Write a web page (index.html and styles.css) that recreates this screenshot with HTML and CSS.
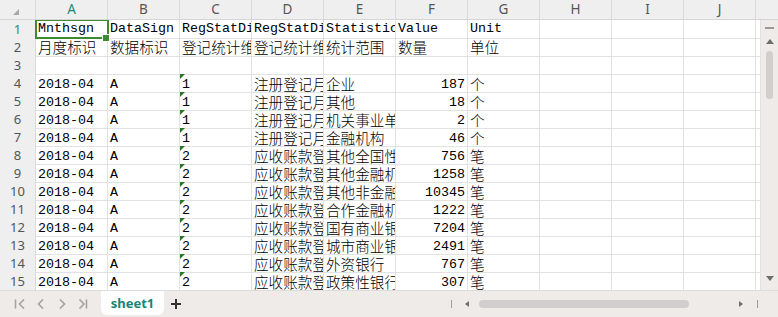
FILE: index.html
```html
<!DOCTYPE html>
<html lang="zh-CN">
<head>
    <meta charset="UTF-8">
    <title>sheet1</title>
    <link rel="stylesheet" href="styles.css">
</head>
<body>
    <div class="sheet">
        <div class="col-heads">
            <div class="corner"><span class="corner-mark"></span></div>
            <div class="col-head active">A</div>
            <div class="col-head">B</div>
            <div class="col-head">C</div>
            <div class="col-head">D</div>
            <div class="col-head">E</div>
            <div class="col-head">F</div>
            <div class="col-head">G</div>
            <div class="col-head">H</div>
            <div class="col-head">I</div>
            <div class="col-head">J</div>
            <div class="col-head filler"></div>
        </div>

        <div class="body">
            <div class="grid">
                <div class="row mid">
                    <div class="row-head active">1</div>
                    <div class="cell selected">Mnthsgn</div>
                    <div class="cell">DataSign</div>
                    <div class="cell">RegStatDimCode</div>
                    <div class="cell">RegStatDimName</div>
                    <div class="cell">StatisticalScope</div>
                    <div class="cell">Value</div>
                    <div class="cell">Unit</div>
                    <div class="cell"></div><div class="cell"></div><div class="cell"></div><div class="cell"></div>
                </div>
                <div class="row">
                    <div class="row-head">2</div>
                    <div class="cell zh">月度标识</div>
                    <div class="cell zh">数据标识</div>
                    <div class="cell zh">登记统计维度代码</div>
                    <div class="cell zh">登记统计维度名称</div>
                    <div class="cell zh">统计范围</div>
                    <div class="cell zh">数量</div>
                    <div class="cell zh">单位</div>
                    <div class="cell"></div><div class="cell"></div><div class="cell"></div><div class="cell"></div>
                </div>
                <div class="row">
                    <div class="row-head">3</div>
                    <div class="cell"></div><div class="cell"></div><div class="cell"></div><div class="cell"></div><div class="cell"></div>
                    <div class="cell"></div><div class="cell"></div><div class="cell"></div><div class="cell"></div><div class="cell"></div><div class="cell"></div>
                </div>
                <div class="row data">
                    <div class="row-head">4</div>
                    <div class="cell">2018-04</div>
                    <div class="cell">A</div>
                    <div class="cell txt-num">1</div>
                    <div class="cell zh">注册登记月度统计</div>
                    <div class="cell zh">企业</div>
                    <div class="cell num">187</div>
                    <div class="cell zh">个</div>
                    <div class="cell"></div><div class="cell"></div><div class="cell"></div><div class="cell"></div>
                </div>
                <div class="row data">
                    <div class="row-head">5</div>
                    <div class="cell">2018-04</div>
                    <div class="cell">A</div>
                    <div class="cell txt-num">1</div>
                    <div class="cell zh">注册登记月度统计</div>
                    <div class="cell zh">其他</div>
                    <div class="cell num">18</div>
                    <div class="cell zh">个</div>
                    <div class="cell"></div><div class="cell"></div><div class="cell"></div><div class="cell"></div>
                </div>
                <div class="row data">
                    <div class="row-head">6</div>
                    <div class="cell">2018-04</div>
                    <div class="cell">A</div>
                    <div class="cell txt-num">1</div>
                    <div class="cell zh">注册登记月度统计</div>
                    <div class="cell zh">机关事业单位</div>
                    <div class="cell num">2</div>
                    <div class="cell zh">个</div>
                    <div class="cell"></div><div class="cell"></div><div class="cell"></div><div class="cell"></div>
                </div>
                <div class="row data">
                    <div class="row-head">7</div>
                    <div class="cell">2018-04</div>
                    <div class="cell">A</div>
                    <div class="cell txt-num">1</div>
                    <div class="cell zh">注册登记月度统计</div>
                    <div class="cell zh">金融机构</div>
                    <div class="cell num">46</div>
                    <div class="cell zh">个</div>
                    <div class="cell"></div><div class="cell"></div><div class="cell"></div><div class="cell"></div>
                </div>
                <div class="row data">
                    <div class="row-head">8</div>
                    <div class="cell">2018-04</div>
                    <div class="cell">A</div>
                    <div class="cell txt-num">2</div>
                    <div class="cell zh">应收账款登记统计</div>
                    <div class="cell zh">其他全国性银行</div>
                    <div class="cell num">756</div>
                    <div class="cell zh">笔</div>
                    <div class="cell"></div><div class="cell"></div><div class="cell"></div><div class="cell"></div>
                </div>
                <div class="row data">
                    <div class="row-head">9</div>
                    <div class="cell">2018-04</div>
                    <div class="cell">A</div>
                    <div class="cell txt-num">2</div>
                    <div class="cell zh">应收账款登记统计</div>
                    <div class="cell zh">其他金融机构</div>
                    <div class="cell num">1258</div>
                    <div class="cell zh">笔</div>
                    <div class="cell"></div><div class="cell"></div><div class="cell"></div><div class="cell"></div>
                </div>
                <div class="row data">
                    <div class="row-head">10</div>
                    <div class="cell">2018-04</div>
                    <div class="cell">A</div>
                    <div class="cell txt-num">2</div>
                    <div class="cell zh">应收账款登记统计</div>
                    <div class="cell zh">其他非金融机构</div>
                    <div class="cell num">10345</div>
                    <div class="cell zh">笔</div>
                    <div class="cell"></div><div class="cell"></div><div class="cell"></div><div class="cell"></div>
                </div>
                <div class="row data">
                    <div class="row-head">11</div>
                    <div class="cell">2018-04</div>
                    <div class="cell">A</div>
                    <div class="cell txt-num">2</div>
                    <div class="cell zh">应收账款登记统计</div>
                    <div class="cell zh">合作金融机构</div>
                    <div class="cell num">1222</div>
                    <div class="cell zh">笔</div>
                    <div class="cell"></div><div class="cell"></div><div class="cell"></div><div class="cell"></div>
                </div>
                <div class="row data">
                    <div class="row-head">12</div>
                    <div class="cell">2018-04</div>
                    <div class="cell">A</div>
                    <div class="cell txt-num">2</div>
                    <div class="cell zh">应收账款登记统计</div>
                    <div class="cell zh">国有商业银行</div>
                    <div class="cell num">7204</div>
                    <div class="cell zh">笔</div>
                    <div class="cell"></div><div class="cell"></div><div class="cell"></div><div class="cell"></div>
                </div>
                <div class="row data">
                    <div class="row-head">13</div>
                    <div class="cell">2018-04</div>
                    <div class="cell">A</div>
                    <div class="cell txt-num">2</div>
                    <div class="cell zh">应收账款登记统计</div>
                    <div class="cell zh">城市商业银行</div>
                    <div class="cell num">2491</div>
                    <div class="cell zh">笔</div>
                    <div class="cell"></div><div class="cell"></div><div class="cell"></div><div class="cell"></div>
                </div>
                <div class="row data">
                    <div class="row-head">14</div>
                    <div class="cell">2018-04</div>
                    <div class="cell">A</div>
                    <div class="cell txt-num">2</div>
                    <div class="cell zh">应收账款登记统计</div>
                    <div class="cell zh">外资银行</div>
                    <div class="cell num">767</div>
                    <div class="cell zh">笔</div>
                    <div class="cell"></div><div class="cell"></div><div class="cell"></div><div class="cell"></div>
                </div>
                <div class="row data">
                    <div class="row-head">15</div>
                    <div class="cell">2018-04</div>
                    <div class="cell">A</div>
                    <div class="cell txt-num">2</div>
                    <div class="cell zh">应收账款登记统计</div>
                    <div class="cell zh">政策性银行</div>
                    <div class="cell num">307</div>
                    <div class="cell zh">笔</div>
                    <div class="cell"></div><div class="cell"></div><div class="cell"></div><div class="cell"></div>
                </div>
            </div>

            <div class="vscroll">
                <span class="vscroll-bar"></span>
                <span class="arrow-up"></span>
                <span class="vscroll-thumb"></span>
                <span class="arrow-down"></span>
            </div>
        </div>

        <div class="tabbar">
            <div class="tab-nav">
                <svg width="12" height="10" viewBox="0 0 12 10"><path d="M1.5 0.5v9M10 0.5L5.5 5L10 9.5" fill="none" stroke="#a3a3a3" stroke-width="1.6"/></svg>
                <svg width="12" height="10" viewBox="0 0 12 10"><path d="M8 0.5L3.5 5L8 9.5" fill="none" stroke="#a3a3a3" stroke-width="1.6"/></svg>
                <svg width="12" height="10" viewBox="0 0 12 10"><path d="M4 0.5L8.5 5L4 9.5" fill="none" stroke="#a3a3a3" stroke-width="1.6"/></svg>
                <svg width="12" height="10" viewBox="0 0 12 10"><path d="M2.5 0.5L7 5L2.5 9.5M9.5 0.5v9" fill="none" stroke="#a3a3a3" stroke-width="1.6"/></svg>
            </div>
            <div class="tab">sheet1</div>
            <div class="tab-add">
                <svg width="10" height="10" viewBox="0 0 10 10"><path d="M5 0v10M0 5h10" stroke="#333" stroke-width="2"/></svg>
            </div>
            <div class="hscroll">
                <span class="hscroll-sep"></span>
                <span class="arrow-left"></span>
                <span class="hscroll-thumb"></span>
                <span class="arrow-right"></span>
                <span class="hscroll-sep"></span>
            </div>
        </div>
    </div>
</body>
</html>
```

FILE: styles.css
```css
/* Spreadsheet view */
* { box-sizing: border-box; }
html, body { margin: 0; padding: 0; }
body { width: 778px; height: 317px; overflow: hidden; background: #fff; font-family: "Noto Sans", "Open Sans", sans-serif; }

.sheet { display: flex; flex-direction: column; height: 317px; }

/* column headers */
.col-heads { display: flex; height: 20px; background: #efefef; border-bottom: 1px solid #d6d6d6; }
.corner { width: 36px; padding: 9px 0 0 13px; border-right: 1px solid #dadada; }
.corner-mark { display: block; width: 0; height: 0; border-left: 6px solid transparent; border-bottom: 6px solid #a8a8a8; }
.col-head { width: 72px; border-right: 1px solid #dadada; text-align: center; font-size: 13.5px; line-height: 19px; color: #555; }
.col-head.active { color: #1b8a78; }
.col-head.filler { flex: 1; border-right: 0; }

/* cells */
.body { display: flex; height: 270px; }
.grid { width: 761px; overflow: hidden; }
.row { display: grid; grid-template-columns: 36px repeat(10, 72px) 5px; height: 18px; }
.row-head { background: #efefef; border-right: 1px solid #dadada; border-bottom: 1px solid #e2e2e2; text-align: center; font-size: 13px; line-height: 18px; color: #555; }
.row-head.active { color: #1b8a78; }
.cell { position: relative; border-right: 1px solid #e2e2e2; border-bottom: 1px solid #e2e2e2; padding: 2px 2px 0; white-space: nowrap; overflow: hidden; font-family: "Liberation Mono", "Noto Sans CJK SC", monospace; font-size: 13.33px; line-height: 16px; color: #000; }
.row.mid .cell { padding-top: 0; line-height: 17px; }
.row.data .cell { padding-top: 3px; line-height: 15px; }
.cell.zh { font-family: "Noto Sans CJK SC", sans-serif; font-size: 14.6px; font-weight: 300; line-height: 16px; padding-top: 1px; }
.row.data .cell.zh { padding-top: 2px; line-height: 16px; }
.cell.num { text-align: right; }
.cell.txt-num::before { content: ""; position: absolute; top: 0; left: 0; border-top: 5px solid #237a23; border-right: 5px solid transparent; }

.cell.selected { overflow: visible; z-index: 2; }
.cell.selected::before { content: ""; position: absolute; top: -1px; left: -1px; right: -2px; bottom: -1px; border: 2px solid #3f8a30; }
.cell.selected::after { content: ""; position: absolute; right: -3px; bottom: -4px; width: 6px; height: 6px; background: #3f8a30; border: 1px solid #fff; }

/* vertical scrollbar */
.vscroll { width: 17px; background: #eeebe9; display: flex; flex-direction: column; align-items: center; padding-top: 7px; }
.vscroll-bar { width: 9px; height: 2px; background: #9a9a9a; }
.arrow-up { margin-top: 10px; width: 0; height: 0; border-left: 4px solid transparent; border-right: 4px solid transparent; border-bottom: 5px solid #6e6e6e; }
.vscroll-thumb { margin-top: 7px; width: 7px; height: 48px; border-radius: 4px; background: #d2cecd; }
.arrow-down { margin-top: auto; margin-bottom: 9px; width: 0; height: 0; border-left: 4px solid transparent; border-right: 4px solid transparent; border-top: 5px solid #6e6e6e; }

/* sheet tabs */
.tabbar { flex: 1; display: flex; align-items: center; background: #efebe9; border-top: 1px solid #dedbd9; padding-left: 14px; }
.tab-nav { display: flex; gap: 9px; }
.tab-nav svg { display: block; }
.tab { align-self: flex-start; margin-left: 12px; width: 63px; height: 24px; background: #fff; border-radius: 0 0 6px 6px; text-align: center; font-size: 13px; font-weight: 700; line-height: 24px; color: #16857a; }
.tab-add { margin-left: 7px; }
.tab-add svg { display: block; }

.hscroll { margin-left: auto; margin-right: 20px; display: flex; align-items: center; }
.hscroll-sep { width: 1px; height: 8px; background: #9c9c9c; }
.arrow-left { margin-left: 13px; width: 0; height: 0; border-top: 3.5px solid transparent; border-bottom: 3.5px solid transparent; border-right: 4px solid #6e6e6e; }
.hscroll-thumb { margin-left: 10px; width: 210px; height: 8px; border-radius: 4px; background: #d2cecd; }
.arrow-right { margin-left: 50px; margin-right: 14px; width: 0; height: 0; border-top: 3.5px solid transparent; border-bottom: 3.5px solid transparent; border-left: 4px solid #6e6e6e; }
```
